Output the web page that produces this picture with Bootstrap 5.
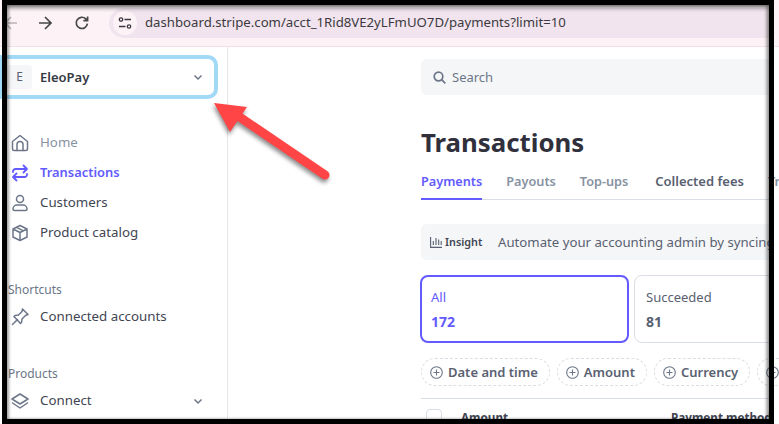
<!DOCTYPE html>
<html lang="en">
<head>
  <meta charset="UTF-8" />
  <meta name="viewport" content="width=device-width, initial-scale=1.0" />
  <title>Transactions</title>
  <link href="https://cdn.jsdelivr.net/npm/bootstrap@5.3.3/dist/css/bootstrap.min.css" rel="stylesheet" />
  <style>
    html, body { height: 424px; overflow: hidden; }
    body { font-family: "Noto Sans", "Open Sans", sans-serif; font-size: 14px; color: #353a44; background: #fff; position: relative; }
    svg { flex: none; display: block; }

    /* browser bar */
    .chrome-bar { height: 47px; padding: 5px 6px 6px 0; background: #fdf3f7; border-bottom: 1px solid #f3dfe6; }
    .chrome-btn { width: 16px; fill: none; stroke: #474747; stroke-width: 1.7; }
    .chrome-back { margin-left: 3px; stroke: #b9b5b8; }
    .chrome-fwd { margin-left: 18px; }
    .chrome-reload { margin-left: 21px; }
    .url-pill { margin-left: 19px; flex: 1; height: 30px; background: #f1e4ee; border-radius: 15px 0 0 15px; padding-left: 4px; }
    .url-tune { width: 24px; height: 24px; border-radius: 50%; background: #fdf3f7; }
    .url-text { margin-left: 8px; font-size: 13.2px; color: #3c3a40; white-space: nowrap; }

    /* sidebar */
    .side-col { width: 228px; height: 377px; border-right: 1px solid #e6e6e8; flex: none; padding-top: 8px; }
    .acct-box { width: 218px; height: 44px; border: 4px solid #a1d9f7; border-left-width: 3px; border-radius: 0 10px 10px 0; padding: 0 11px 0 4px; }
    .acct-tile { width: 25px; height: 24px; background: #f5f6f8; border-radius: 4px; font-size: 12px; color: #596171; }
    .acct-name { margin-left: 8px; padding-top: 1px; font-weight: 600; font-size: 13px; }
    .side-nav { margin-top: 29px; }
    .side-item { height: 30px; padding-left: 11px; font-size: 13.3px; color: #414552; }
    .side-item svg.ico { width: 18px; height: 18px; margin-right: 11px; fill: none; stroke: #6c7688; stroke-width: 1.5; stroke-linejoin: round; stroke-linecap: round; }
    .side-home { color: #8792a2; }
    .side-active { color: #635bff; font-weight: 600; font-size: 12.9px; }
    .side-active svg.ico { stroke: #635bff; }
    .side-label { padding-left: 8px; font-size: 12px; color: #6c7688; line-height: 16px; margin-top: 34px; margin-bottom: 4px; }
    .side-chev { margin-left: auto; margin-right: 24px; }

    /* main column */
    .main-col { padding: 12px 6px 0 193px; width: 551px; flex: none; overflow: hidden; height: 377px; }
    .search-box { height: 36px; background: #f5f6f8; border-radius: 6px; padding-left: 12px; color: #6c7688; }
    .search-box span { margin-left: 6px; font-size: 13px; padding-top: 1px; }
    .page-title { margin: 28px 0 0; font-size: 25.8px; line-height: 38px; font-weight: 700; color: #30303d; }
    .tab-row { margin-top: 7px; height: 32px; border-bottom: 1px solid #d8dee4; gap: 24px; font-size: 12.7px; font-weight: 600; color: #8792a2; }
    .tab-link { height: 32px; line-height: 27px; white-space: nowrap; }
    .tab-on { color: #635bff; border-bottom: 2px solid #635bff; }
    .tab-dark { color: #596171; font-size: 13px; margin-left: 3px; }
    .insight-bar { margin-top: 24px; height: 36px; background: #f5f6f8; border-radius: 6px; padding-left: 9px; white-space: nowrap; overflow: hidden; }
    .insight-tag { margin-left: 3px; font-size: 10.8px; font-weight: 600; color: #414552; flex: 0 0 53px; padding-top: 1px; }
    .insight-text { font-size: 13.2px; color: #596171; padding-top: 1px; }
    .count-row { margin-top: 15px; margin-left: -1px; gap: 5px; }
    .count-card { width: 209px; height: 68px; border: 1px solid #d8dee4; border-radius: 8px 0 0 8px; padding: 12px 11px; color: #596171; flex: 1; }
    .count-on { border: 2px solid #635bff; border-radius: 8px; padding: 11px 9px; color: #635bff; flex: none; }
    .count-name { font-size: 13px; line-height: 19px; }
    .count-num { font-size: 14px; font-weight: 700; line-height: 20px; margin-top: 5px; }
    .pill-row { margin-top: 15px; gap: 7px; }
    .filter-pill { height: 28px; border: 1px dashed #d8dee4; border-radius: 14px; padding: 1px 11px 0 8px; font-size: 13px; font-weight: 600; color: #596171; white-space: nowrap; }
    .filter-pill svg { width: 13px; height: 13px; margin-right: 5px; fill: none; stroke: #6c7688; stroke-width: 1.1; }
    .pill-stub { flex: 1; border-right: 0; border-radius: 14px 0 0 14px; }
    .thead-row { margin-top: 12px; border-top: 1px solid #d8dee4; height: 40px; padding: 10px 0 0 5px; font-size: 11.7px; font-weight: 700; color: #414552; white-space: nowrap; }
    .thead-check { width: 16px; height: 16px; border: 1px solid #d8dee4; border-radius: 4px; }
    .thead-amount { margin-left: 19px; width: 210px; }

    /* screenshot annotations */
    .shot-frame { position: absolute; left: 2px; top: 0; width: 772px; height: 424px; border: 5px solid #000; box-shadow: inset 0 3px 4px rgba(0,0,0,.45), inset 2px 0 3px rgba(0,0,0,.2), inset -3px 0 3px rgba(0,0,0,.25); pointer-events: none; }
    .shot-arrow { position: absolute; left: 205px; top: 95px; width: 135px; height: 95px; overflow: visible; filter: drop-shadow(-1px 3px 2px rgba(0,0,0,.45)); }
  </style>
</head>
<body>
  <!-- browser bar -->
  <div class="chrome-bar d-flex align-items-center">
    <svg class="chrome-btn chrome-back" height="16" viewBox="0 0 16 16"><path d="M14 8H2M8 2 2 8l6 6"/></svg>
    <svg class="chrome-btn chrome-fwd" height="16" viewBox="0 0 16 16"><path d="M2 8h12M8 2l6 6-6 6"/></svg>
    <svg class="chrome-btn chrome-reload" height="16" viewBox="0 0 16 16"><path d="M13.4 8.6A5.6 5.6 0 1 1 11.8 3.900L13.600 5.700M13.600 1.500v4.200H9.400"/></svg>
    <div class="url-pill d-flex align-items-center">
      <div class="url-tune d-flex align-items-center justify-content-center">
        <svg width="14" height="14" viewBox="0 0 14 14" fill="none" stroke="#3c3a40" stroke-width="1.300"><circle cx="3" cy="3.500" r="1.700"/><path d="M6.500 3.500H13M1 10.500h6.500"/><circle cx="11" cy="10.500" r="1.700"/></svg>
      </div>
      <span class="url-text">dashboard.stripe.com/acct_1Rid8VE2yLFmUO7D/payments?limit=10</span>
    </div>
  </div>

  <div class="d-flex">
    <!-- sidebar -->
    <div class="side-col">
      <div class="acct-box d-flex align-items-center">
        <div class="acct-tile d-flex align-items-center justify-content-center">E</div>
        <span class="acct-name">EleoPay</span>
        <svg class="ms-auto" width="10" height="10" viewBox="0 0 10 10" fill="none" stroke="#6c7688" stroke-width="1.500"><path d="M1.500 3.500 5 7l3.500-3.500"/></svg>
      </div>

      <div class="side-nav">
        <div class="side-item side-home d-flex align-items-center">
          <svg class="ico" viewBox="0 0 18 18"><path d="M1.500 7.500 9 1.500l7.500 6V15a1.500 1.500 0 0 1-1.500 1.500H3A1.500 1.500 0 0 1 1.500 15z"/><path d="M6 16.500V10.500a3 3 0 0 1 6 0v6"/></svg>
          Home
        </div>
        <div class="side-item side-active d-flex align-items-center">
          <svg class="ico" viewBox="0 0 18 18"><path d="M2 8V7.500A2.500 2.500 0 0 1 4.500 5H16M12.500 1.500 16 5l-3.500 3.500M16 10v.5a2.500 2.500 0 0 1-2.500 2.500H2M5.500 9.500 2 13l3.500 3.500" stroke-width="1.800"/></svg>
          Transactions
        </div>
        <div class="side-item d-flex align-items-center">
          <svg class="ico" viewBox="0 0 18 18"><circle cx="9" cy="5" r="3.500"/><path d="M2 15a4 4 0 0 1 4-4h6a4 4 0 0 1 4 4 1.500 1.500 0 0 1-1.500 1.500h-11A1.500 1.500 0 0 1 2 15z"/></svg>
          Customers
        </div>
        <div class="side-item d-flex align-items-center">
          <svg class="ico" viewBox="0 0 18 18"><path d="M9 1.500 16 5v8l-7 3.500L2 13V5zM2 5l7 3.500L16 5M9 8.500v8M5.500 3.300l7 3.500"/></svg>
          Product catalog
        </div>
      </div>

      <div class="side-label">Shortcuts</div>
      <div class="side-item d-flex align-items-center">
        <svg class="ico" viewBox="0 0 18 18"><path d="M11.500 1 17 6.500l-2.500 1-3.500 3.500-.5 3.500-1 1L3 8.500l1-1 3.500-.5L11 3.500zM6.500 11.500 1.500 16.500"/></svg>
        Connected accounts
      </div>

      <div class="side-label">Products</div>
      <div class="side-item d-flex align-items-center">
        <svg class="ico" viewBox="0 0 18 18"><path d="M9 2 17 7l-8 5-8-5zM1.500 11 9 16l7.500-5"/></svg>
        Connect
        <svg class="side-chev" width="10" height="10" viewBox="0 0 10 10" fill="none" stroke="#6c7688" stroke-width="1.500"><path d="M1.500 3.500 5 7l3.500-3.500"/></svg>
      </div>
    </div>

    <!-- main -->
    <div class="main-col">
      <div class="search-box d-flex align-items-center">
        <svg width="13" height="13" viewBox="0 0 13 13" fill="none" stroke="#6c7688" stroke-width="1.700"><circle cx="5.500" cy="5.500" r="4.300"/><path d="m8.700 8.700 3.600 3.600"/></svg>
        <span>Search</span>
      </div>

      <h1 class="page-title">Transactions</h1>

      <div class="tab-row d-flex">
        <div class="tab-link tab-on">Payments</div>
        <div class="tab-link">Payouts</div>
        <div class="tab-link">Top-ups</div>
        <div class="tab-link tab-dark">Collected fees</div>
        <div class="tab-link">Tr</div>
      </div>

      <div class="insight-bar d-flex align-items-center">
        <svg width="12" height="12" viewBox="0 0 12 12" fill="none" stroke="#596171" stroke-width="1.100"><path d="M.6 1v10.400H12M3.300 9V5M6 9V2M8.700 9V3.500M11.200 9V5"/></svg>
        <span class="insight-tag">Insight</span>
        <span class="insight-text">Automate your accounting admin by syncing</span>
      </div>

      <div class="count-row d-flex">
        <div class="count-card count-on">
          <div class="count-name">All</div>
          <div class="count-num">172</div>
        </div>
        <div class="count-card">
          <div class="count-name">Succeeded</div>
          <div class="count-num">81</div>
        </div>
      </div>

      <div class="pill-row d-flex">
        <div class="filter-pill d-flex align-items-center"><svg viewBox="0 0 13 13"><circle cx="6.500" cy="6.500" r="5.800"/><path d="M6.500 3.500v6M3.500 6.500h6"/></svg>Date and time</div>
        <div class="filter-pill d-flex align-items-center"><svg viewBox="0 0 13 13"><circle cx="6.500" cy="6.500" r="5.800"/><path d="M6.500 3.500v6M3.500 6.500h6"/></svg>Amount</div>
        <div class="filter-pill d-flex align-items-center"><svg viewBox="0 0 13 13"><circle cx="6.500" cy="6.500" r="5.800"/><path d="M6.500 3.500v6M3.500 6.500h6"/></svg>Currency</div>
        <div class="filter-pill pill-stub d-flex align-items-center"><svg viewBox="0 0 13 13"><circle cx="6.500" cy="6.500" r="5.800"/><path d="M6.500 3.500v6M3.500 6.500h6"/></svg></div>
      </div>

      <div class="thead-row d-flex">
        <div class="thead-check"></div>
        <div class="thead-amount">Amount</div>
        <div>Payment method</div>
      </div>
    </div>
  </div>

  <!-- screenshot annotations -->
  <div class="shot-frame"></div>
  <svg class="shot-arrow" viewBox="0 0 135 95">
    <path d="M120 80 33 21" stroke="#ff4545" stroke-width="9" stroke-linecap="round" fill="none"/>
    <path d="M9 8 42 12 25 37z" fill="#ff4545"/>
  </svg>

  <script src="https://cdn.jsdelivr.net/npm/bootstrap@5.3.3/dist/js/bootstrap.bundle.min.js"></script>
</body>
</html>
